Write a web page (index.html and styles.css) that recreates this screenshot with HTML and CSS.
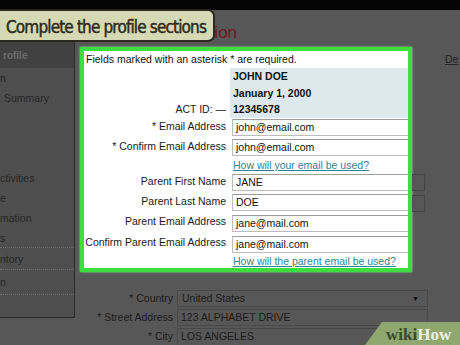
FILE: index.html
```html
<!DOCTYPE html>
<html>
<head>
<meta charset="utf-8">
<link rel="stylesheet" href="styles.css">
</head>
<body>
<div class="topbar"></div>
<div class="page">
  <aside class="sidebar">
    <div class="side-head">rofile</div>
    <ul class="side-list">
      <li class="item">n</li>
      <li class="item indent">Summary</li>
      <li class="item"></li>
      <li class="item"></li>
      <li class="item"></li>
      <li class="item">ctivities</li>
      <li class="item">e</li>
      <li class="item">mation</li>
      <li class="item dotted">s</li>
      <li class="item tall dotted">ntory</li>
      <li class="item taller dotted">n</li>
    </ul>
  </aside>
  <main class="main">
    <h1 class="title">Information</h1>
    <div class="top-row">
      <section class="focus">
        <div class="form">
          <div class="note">Fields marked with an asterisk * are required.</div>
          <div class="label"></div><div class="shade">JOHN DOE</div>
          <div class="label"></div><div class="shade mid">January 1, 2000</div>
          <div class="label">ACT ID: —</div><div class="shade">12345678</div>

          <div class="label">* Email Address</div>
          <div class="cell"><div class="field">john@email.com</div></div>
          <div class="label">* Confirm Email Address</div>
          <div class="cell"><div class="field">john@email.com</div></div>
          <div class="label"></div>
          <div class="linkcell"><a class="help">How will your email be used?</a></div>

          <div class="label">Parent First Name</div>
          <div class="cell"><div class="field">JANE</div></div>
          <div class="label">Parent Last Name</div>
          <div class="cell"><div class="field">DOE</div></div>
          <div class="label">Parent Email Address</div>
          <div class="cell wide"><div class="field">jane@mail.com</div></div>
          <div class="label">Confirm Parent Email Address</div>
          <div class="cell wide"><div class="field">jane@mail.com</div></div>
          <div class="label"></div>
          <div class="linkcell last"><a class="help">How will the parent email be used?</a></div>
        </div>
      </section>
      <div class="beside">
        <a class="details">De</a>
        <span class="stub first"></span>
        <span class="stub"></span>
      </div>
    </div>
    <div class="lower">
      <div class="dlabel">* Country</div>
      <div class="dfield select">United States<span class="arrow">▼</span></div>
      <div class="dlabel">* Street Address</div>
      <div class="dfield">123 ALPHABET DRIVE</div>
      <div class="dlabel">* City</div>
      <div class="dfield open">LOS ANGELES</div>
    </div>
  </main>
</div>
<div class="caption">Complete the profile sections</div>
<div class="wikihow"><span class="wiki">wiki</span><span class="how">How</span></div>
</body>
</html>
```

FILE: styles.css
```css
html, body {
  margin: 0;
  padding: 0;
}
body {
  width: 460px;
  height: 345px;
  overflow: hidden;
  position: relative;
  background: #575757;
  font-family: "Liberation Sans", Arial, sans-serif;
  font-size: 10.5px;
  color: #111;
}
.topbar {
  height: 10px;
  background: #050505;
}
.page {
  display: flex;
  align-items: flex-start;
}

/* sidebar */
.sidebar {
  flex: none;
  width: 74px;
  height: 275px;
  margin-top: 32px;
  background: #4e4e4e;
  border-right: 1px solid #2b2b2b;
  border-bottom: 1px solid #2b2b2b;
  overflow: hidden;
}
.side-head {
  height: 26px;
  line-height: 28px;
  padding-left: 3px;
  background: #414141;
  color: #6c6c6c;
  font-weight: bold;
  font-size: 10px;
}
.side-list {
  list-style: none;
  margin: 0;
  padding: 0;
}
.item {
  height: 20px;
  line-height: 20px;
  color: #262626;
  white-space: nowrap;
}
.item.indent {
  padding-left: 4px;
}
.item.dotted {
  box-sizing: border-box;
  border-bottom: 1px dotted #6e6e6e;
}
.item.tall {
  height: 22px;
  line-height: 22px;
}
.item.taller {
  height: 25px;
  line-height: 25px;
}

/* main */
.main {
  flex: 1;
  min-width: 0;
}
.title {
  margin: 13px 0 0 77px;
  font-size: 17px;
  line-height: 19px;
  font-weight: normal;
  color: #6a1b22;
  white-space: nowrap;
}
.top-row {
  display: flex;
  margin-top: 5px;
}
.focus {
  flex: none;
  width: 324px;
  height: 217px;
  margin-left: 5px;
  border: 4px solid #3fde3f;
  box-shadow: 0 0 2px #7dff7d;
  background: #fff;
  overflow: hidden;
}
.form {
  display: grid;
  grid-template-columns: 146px 178px;
}
.note {
  grid-column: 1 / 3;
  height: 17px;
  line-height: 17px;
  padding-left: 2px;
  white-space: nowrap;
}
.label {
  text-align: right;
  padding-right: 4px;
  line-height: 17px;
  color: #1a1a1a;
  white-space: nowrap;
}
.shade {
  background: #dde9ec;
  font-weight: bold;
  height: 17px;
  line-height: 17px;
  padding-left: 3px;
  white-space: nowrap;
}
.shade.mid {
  height: 16px;
  line-height: 16px;
}
.cell {
  height: 20px;
  padding-top: 1px;
  box-sizing: border-box;
}
.cell.wide {
  height: 21px;
  padding-top: 2px;
}
.field {
  width: 200px;
  height: 17px;
  box-sizing: border-box;
  margin-left: 2px;
  border: 1px solid #bcbcbc;
  border-top-color: #9c9c9c;
  line-height: 15px;
  padding-left: 3px;
  white-space: nowrap;
}
.linkcell {
  height: 15px;
  line-height: 15px;
  padding-left: 3px;
  white-space: nowrap;
}
.linkcell.last {
  height: 13px;
  line-height: 13px;
}
.help {
  color: #2b8595;
  text-decoration: underline;
}

/* right of focus */
.beside {
  flex: 1;
  min-width: 0;
  display: flex;
  flex-direction: column;
  align-items: flex-start;
  overflow: hidden;
  white-space: nowrap;
}
.details {
  padding: 4px 0 0 33px;
  line-height: 17px;
  color: #232323;
  text-decoration: underline;
}
.stub {
  width: 13px;
  height: 17px;
  box-sizing: border-box;
  border: 1px solid #464646;
  border-left: none;
  background: #575757;
  margin-top: 4px;
}
.stub.first {
  margin-top: 106px;
}

/* lower dim form */
.lower {
  display: grid;
  grid-template-columns: 98px 251px;
  column-gap: 4px;
  row-gap: 2px;
  margin-top: 18px;
  color: #1c1c1c;
}
.dlabel {
  text-align: right;
  line-height: 17px;
  white-space: nowrap;
}
.dfield {
  height: 17px;
  box-sizing: border-box;
  border: 1px solid #484848;
  line-height: 15px;
  padding-left: 3px;
  white-space: nowrap;
  display: flex;
  justify-content: space-between;
}
.dfield.select {
  padding-left: 4px;
}
.dfield.open {
  border-bottom: none;
}
.arrow {
  font-size: 7px;
  color: #0a0a0a;
  padding-right: 8px;
}

/* overlays */
.caption {
  position: absolute;
  top: 9px;
  left: -4px;
  width: 219px;
  height: 33px;
  box-sizing: border-box;
  padding: 6px 0 3px 8px;
  background: #d5dab5;
  border: 2px solid #2a2a20;
  border-radius: 0 7px 7px 0;
  font-family: "DejaVu Sans Condensed", "DejaVu Sans", sans-serif;
  font-size: 17px;
  line-height: 20px;
  letter-spacing: -0.85px;
  color: #2b2a1c;
  -webkit-text-stroke: 0.45px #2b2a1c;
  white-space: nowrap;
}
.wikihow {
  position: absolute;
  right: 0;
  bottom: 0;
  width: 95px;
  height: 23px;
  box-sizing: border-box;
  padding: 2px 0 0 21px;
  background: #8ea86f;
  clip-path: polygon(17px 0, 100% 0, 100% 100%, 0 100%);
  font-family: "Liberation Serif", "Times New Roman", serif;
  font-weight: bold;
  font-size: 17px;
  line-height: 21px;
  white-space: nowrap;
}
.wiki {
  color: #3a4a2e;
}
.how {
  color: #eef1e6;
}
```
